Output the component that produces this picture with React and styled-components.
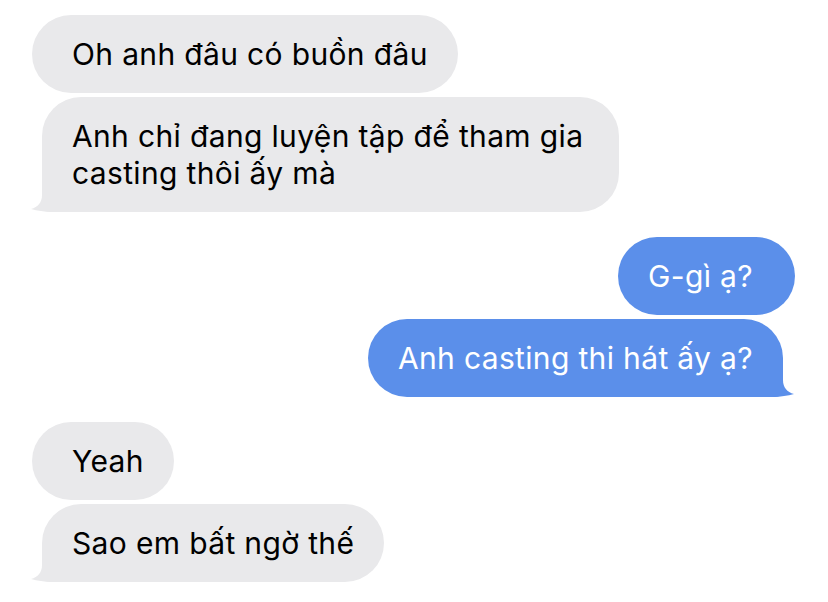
import React from 'react';
import styled, { createGlobalStyle, css } from 'styled-components';

const GRAY = '#e9e9eb';
const BLUE = '#5b8fea';

const GlobalStyle = createGlobalStyle`
  html, body {
    margin: 0;
    padding: 0;
    background: #ffffff;
  }
  body {
    font-family: Inter, "Noto Sans", "Liberation Sans", sans-serif;
    -webkit-font-smoothing: antialiased;
  }
`;

const Thread = styled.div`
  width: 828px;
  height: 602px;
  box-sizing: border-box;
  padding: 15px 45px 0 42px;
  display: flex;
  flex-direction: column;
  gap: 25px;
  overflow: hidden;
`;

const Group = styled.div`
  display: flex;
  flex-direction: column;
  gap: 4px;
  align-items: ${p => (p.$me ? 'flex-end' : 'flex-start')};
`;

const Bubble = styled.div`
  position: relative;
  box-sizing: border-box;
  padding: 21px 30px 20px;
  border-radius: 39px;
  font-size: 30px;
  line-height: 37px;
  letter-spacing: 0.35px;
  background: ${p => (p.$me ? BLUE : GRAY)};
  color: ${p => (p.$me ? '#ffffff' : '#000000')};
  white-space: nowrap;
  ${p => p.$width && css`width: ${p.$width}px;`}
  ${p =>
    !p.$tail &&
    (p.$me
      ? css`margin-right: -12px; padding-right: 42px;`
      : css`margin-left: -10px; padding-left: 40px;`)}
  ${p =>
    p.$tail &&
    (p.$me
      ? css`border-bottom-right-radius: 8px;`
      : css`border-bottom-left-radius: 8px;`)}
`;

const TailShape = styled.svg`
  position: absolute;
  bottom: 0;
  width: 28px;
  height: 28px;
  ${p =>
    p.$me
      ? css`right: -11px; transform: scaleX(-1);`
      : css`left: -11px;`}
`;

const Tail = ({ me }) => (
  <TailShape $me={me} viewBox="0 0 28 28">
    <path
      d="M11 0 L11 11 C11 18.5 7 23 0 25 C6.5 26.8 13 27.8 21 28 L28 28 L28 0 Z"
      fill={me ? BLUE : GRAY}
    />
  </TailShape>
);

const Message = ({ me, tail, width, children }) => (
  <Bubble $me={me} $tail={tail} $width={width}>
    {children}
    {tail && <Tail me={me} />}
  </Bubble>
);

const App = () => (
  <>
    <GlobalStyle />
    <Thread>
      <Group>
        <Message>Oh anh đâu có buồn đâu</Message>
        <Message tail width={577}>
          Anh chỉ đang luyện tập để tham gia
          <br />
          casting thôi ấy mà
        </Message>
      </Group>
      <Group $me>
        <Message me>G-gì ạ?</Message>
        <Message me tail>Anh casting thi hát ấy ạ?</Message>
      </Group>
      <Group>
        <Message>Yeah</Message>
        <Message tail>Sao em bất ngờ thế</Message>
      </Group>
    </Thread>
  </>
);

export default App;
